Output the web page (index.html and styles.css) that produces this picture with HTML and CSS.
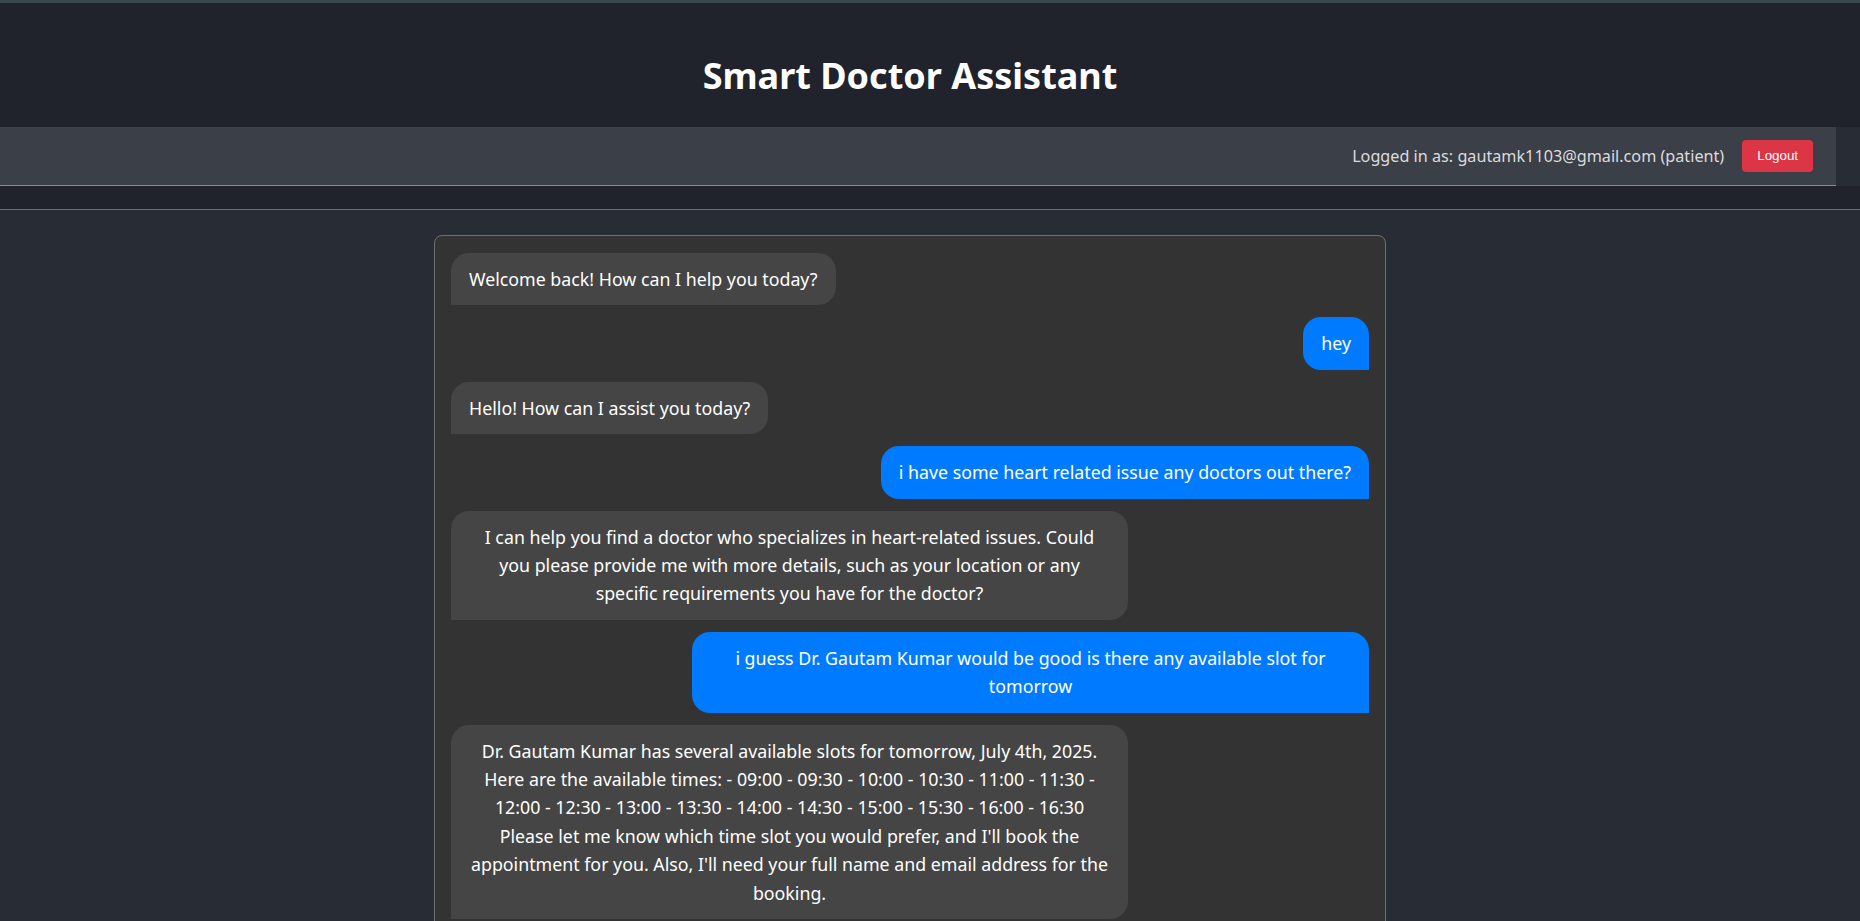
FILE: index.html
```html
<!DOCTYPE html>
<html lang="en">
<head>
<meta charset="utf-8">
<title>Smart Doctor Assistant</title>
<link rel="stylesheet" href="styles.css">
</head>
<body>
<div class="topstrip"></div>
<header class="header">
  <h1 class="title">Smart Doctor Assistant</h1>
</header>
<nav class="nav">
  <span class="user">Logged in as: gautamk1103@gmail.com (patient)</span>
  <button class="logout">Logout</button>
</nav>
<div class="band"></div>
<main class="main">
  <section class="chat">
    <div class="msg bot">Welcome back! How can I help you today?</div>
    <div class="msg me">hey</div>
    <div class="msg bot">Hello! How can I assist you today?</div>
    <div class="msg me">i have some heart related issue any doctors out there?</div>
    <div class="msg bot">I can help you find a doctor who specializes in heart-related issues. Could you please provide me with more details, such as your location or any specific requirements you have for the doctor?</div>
    <div class="msg me">i guess Dr. Gautam Kumar would be good is there any available slot for tomorrow</div>
    <div class="msg bot">Dr. Gautam Kumar has several available slots for tomorrow, July 4th, 2025. Here are the available times: - 09:00 - 09:30 - 10:00 - 10:30 - 11:00 - 11:30 - 12:00 - 12:30 - 13:00 - 13:30 - 14:00 - 14:30 - 15:00 - 15:30 - 16:00 - 16:30 Please let me know which time slot you would prefer, and I'll book the appointment for you. Also, I'll need your full name and email address for the booking.</div>
  </section>
</main>
</body>
</html>
```

FILE: styles.css
```css
* { box-sizing: border-box; }
html, body {
  margin: 0;
  padding: 0;
  background: #282c34;
  font-family: "Noto Sans", "Open Sans", sans-serif;
  color: #fff;
  overflow: hidden;
  height: 921px;
}
.topstrip {
  height: 3px;
  background: #3a4850;
}
.header {
  background: #20232b;
  height: 124px;
  padding-right: 40px;
  padding-top: 22px;
  display: flex;
  align-items: center;
  justify-content: center;
}
.title {
  margin: 0;
  font-size: 36px;
  font-weight: 700;
  line-height: 44px;
  color: #fff;
}
.nav {
  margin-right: 24px;
  height: 59px;
  background: #3b3f48;
  border-bottom: 1px solid #8a8a8a;
  display: flex;
  align-items: center;
  justify-content: flex-end;
  padding: 0 23px 0 24px;
  gap: 18px;
}
.user {
  font-size: 16.2px;
  color: #dcdcdc;
}
.logout {
  font-family: "Liberation Sans", Arial, sans-serif;
  font-size: 13.33px;
  color: #fff;
  background: #dc3545;
  border: none;
  border-radius: 4px;
  padding: 8px 15px;
  line-height: 16px;
}
.band {
  height: 24px;
  background: #20232b;
  border-bottom: 1px solid #6e6e6e;
}
.main {
  padding: 25px 40px 0 0;
  display: flex;
  justify-content: center;
}
.chat {
  width: 952px;
  background: #333333;
  border: 1px solid #6f6f6f;
  border-radius: 8px;
  padding: 17px 16px 16px 16px;
  display: flex;
  flex-direction: column;
  gap: 12px;
  min-height: 800px;
}
.msg {
  max-width: 641px;
  box-sizing: content-box;
  padding: 12px 18px;
  font-size: 17.8px;
  line-height: 28.4px;
  text-align: center;
  border-radius: 18px;
  color: #fff;
}
.bot {
  align-self: flex-start;
  background: #454545;
  border-bottom-left-radius: 0;
}
.me {
  align-self: flex-end;
  background: #007bff;
  border-bottom-right-radius: 0;
}
```
